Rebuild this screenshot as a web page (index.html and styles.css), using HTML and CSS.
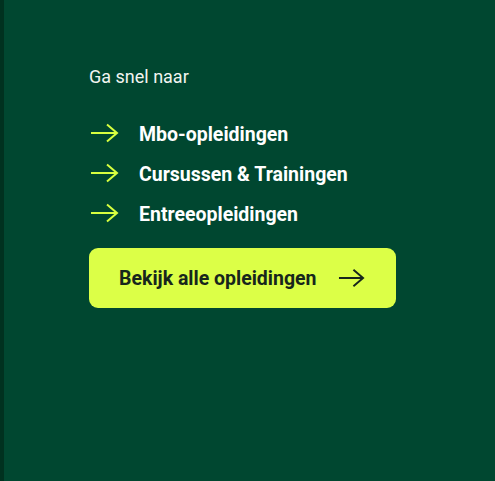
FILE: index.html
```html
<!DOCTYPE html>
<html lang="nl">
<head>
<meta charset="utf-8">
<title>Ga snel naar</title>
<link rel="stylesheet" href="styles.css">
</head>
<body>
<main class="page">
  <section class="quick">
    <p class="quick-title">Ga snel naar</p>
    <ul class="quick-list">
      <li><a class="quick-link" href="#"><svg class="arrow" viewBox="0 0 30 20" aria-hidden="true"><path d="M2 10H28M18 1.5L28 10L18 18.5"/></svg><span>Mbo-opleidingen</span></a></li>
      <li><a class="quick-link" href="#"><svg class="arrow" viewBox="0 0 30 20" aria-hidden="true"><path d="M2 10H28M18 1.5L28 10L18 18.5"/></svg><span>Cursussen &amp; Trainingen</span></a></li>
      <li><a class="quick-link" href="#"><svg class="arrow" viewBox="0 0 30 20" aria-hidden="true"><path d="M2 10H28M18 1.5L28 10L18 18.5"/></svg><span>Entreeopleidingen</span></a></li>
    </ul>
    <a class="cta" href="#"><span>Bekijk alle opleidingen</span><svg class="cta-arrow" viewBox="0 0 28 20" aria-hidden="true"><path d="M1 10H26M16 1.5L26 10L16 18.5"/></svg></a>
  </section>
</main>
</body>
</html>
```

FILE: styles.css
```css
html, body {
  margin: 0;
  padding: 0;
}
body {
  background: #004730;
  font-family: Roboto, "Liberation Sans", sans-serif;
}
.page {
  min-height: 481px;
  box-sizing: border-box;
  border-left: 4px solid #00311f;
  padding: 65px 0 0 85px;
}
.quick {
  display: flex;
  flex-direction: column;
  align-items: flex-start;
}
.quick-title {
  margin: 0;
  font-size: 18px;
  line-height: 24px;
  color: #f2f5f0;
  font-weight: 400;
}
.quick-list {
  list-style: none;
  margin: 25px 0 0;
  padding: 0;
}
.quick-link {
  display: flex;
  align-items: center;
  height: 40px;
  color: #ffffff;
  text-decoration: none;
  font-weight: 700;
  font-size: 19.5px;
}
.arrow {
  width: 30px;
  height: 20px;
  margin-right: 20px;
  margin-top: -3px;
  fill: none;
  stroke: #d7ff3f;
  stroke-width: 2;
}
.cta {
  margin-top: 14px;
  display: flex;
  align-items: center;
  gap: 21px;
  height: 60px;
  box-sizing: border-box;
  padding: 0 31px 0 30px;
  background: #dcff47;
  border-radius: 9px;
  color: #17261c;
  text-decoration: none;
  font-weight: 700;
  font-size: 19.5px;
}
.cta-arrow {
  width: 27px;
  height: 20px;
  fill: none;
  stroke: #17261c;
  stroke-width: 2;
}
```
